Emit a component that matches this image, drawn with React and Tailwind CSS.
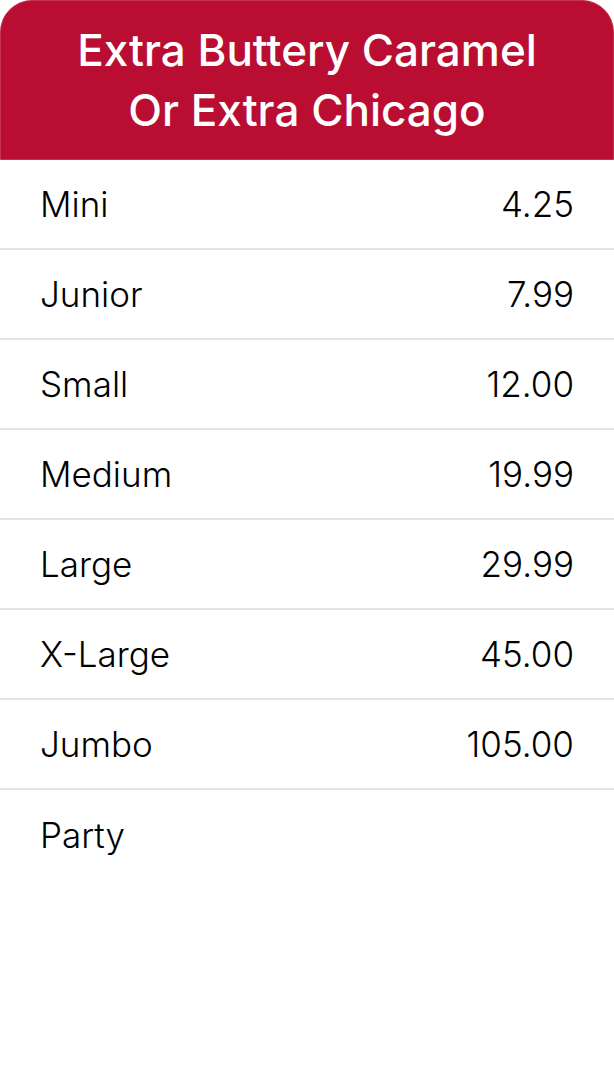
export default function App() {
  const rows = [
    ["Mini", "4.25"],
    ["Junior", "7.99"],
    ["Small", "12.00"],
    ["Medium", "19.99"],
    ["Large", "29.99"],
    ["X-Large", "45.00"],
    ["Jumbo", "105.00"],
    ["Party", ""],
  ];
  return (
    <div className="w-[614px] h-[1088px] bg-white flex flex-col" style={{ fontFamily: "Inter, 'Noto Sans', sans-serif" }}>
      <div className="h-[160px] bg-[#b90e31] rounded-t-[32px] flex items-center justify-center text-center text-white text-[44px] leading-[60px] font-medium border border-[#c4324f]">
        <div>Extra Buttery Caramel<br />Or Extra Chicago</div>
      </div>
      <div className="flex flex-col">
        {rows.map(([n, p], i) => (
          <div key={n} className={`h-[90px] flex items-center justify-between px-[40px] text-[35px] font-light text-black ${i < rows.length - 1 ? "border-b-2 border-[#e4e4e4]" : ""}`}>
            <span>{n}</span>
            <span>{p}</span>
          </div>
        ))}
      </div>
    </div>
  );
}
